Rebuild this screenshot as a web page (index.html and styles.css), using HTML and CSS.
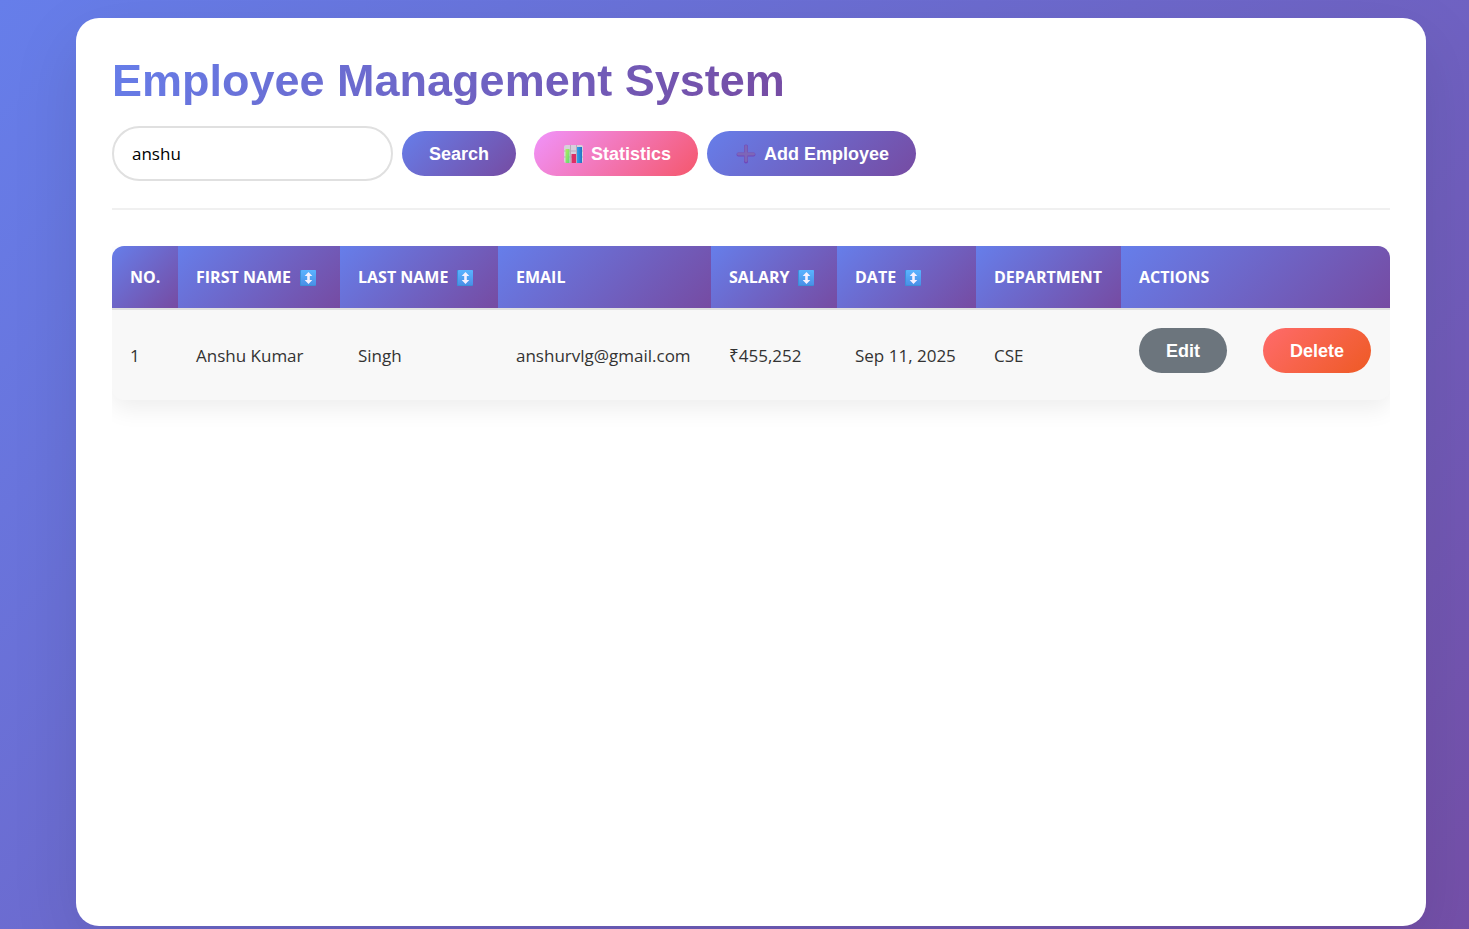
FILE: index.html
```html
<!DOCTYPE html>
<html lang="en">
<head>
<meta charset="utf-8">
<meta name="viewport" content="width=device-width, initial-scale=1">
<title>Employee Management System</title>
<link rel="stylesheet" href="styles.css">
</head>
<body>
<svg class="defs" aria-hidden="true">
  <defs>
    <linearGradient id="tile" x1="0" y1="0" x2="0" y2="1"><stop offset="0" stop-color="#5ab4ff"/><stop offset="1" stop-color="#4a90e8"/></linearGradient>
    <linearGradient id="green" x1="0" y1="0" x2="1" y2="1"><stop offset="0" stop-color="#b6ef5c"/><stop offset="1" stop-color="#5ed67a"/></linearGradient>
    <linearGradient id="blue" x1="0" y1="0" x2="1" y2="0"><stop offset="0" stop-color="#2ea3ec"/><stop offset="1" stop-color="#2472c0"/></linearGradient>
    <symbol id="sort" viewBox="0 0 16 16">
      <rect width="16" height="16" rx="1" fill="#3c8fd8"/>
      <rect x="1" width="15" height="15" rx="1" fill="url(#tile)"/>
      <path d="M8.500 2 12.300 6H9.800v4h2.500L8.500 14 4.700 10h2.500V6H4.700z" fill="#f6f1ff"/>
    </symbol>
  </defs>
</svg>
<main class="card">
  <header class="header">
    <h1 class="title">Employee Management System</h1>
    <div class="toolbar">
      <form class="search" onsubmit="return false">
        <input class="search-input" type="text" aria-label="Search employees" value="anshu">
        <button class="btn" type="submit">Search</button>
      </form>
      <div class="links">
        <button class="btn btn-stats" type="button">
          <svg class="icon" viewBox="0 0 20 20" aria-hidden="true">
            <rect x="1" y="1" width="19" height="18" rx="2" fill="#d8d0dc"/>
            <path d="M1 7h19M1 13h19M7.500 1v18M13.500 1v18" stroke="#b9acbd" stroke-width="1"/>
            <rect x="2.500" y="5" width="4" height="14" fill="url(#green)"/>
            <rect x="8.500" y="10" width="4.500" height="9" fill="#dc2f66"/>
            <rect x="14" y="3" width="5" height="16" fill="url(#blue)"/>
          </svg>Statistics</button>
        <button class="btn" type="button">
          <svg class="icon" viewBox="0 0 20 20" aria-hidden="true">
            <path d="M10 2.500v15M2.500 10.500h15" stroke="#7046ba" stroke-width="4" stroke-linecap="round"/>
            <path d="M10 2.500v14M2.500 10h15" stroke="#7d66b8" stroke-width="3" stroke-linecap="round"/>
          </svg>Add Employee</button>
      </div>
    </div>
  </header>
  <div class="table-wrap">
    <table class="table">
      <colgroup>
        <col class="c-no"><col class="c-first"><col class="c-last"><col class="c-email"><col class="c-salary"><col class="c-date"><col class="c-dept"><col>
      </colgroup>
      <thead>
        <tr>
          <th>No.</th>
          <th>First Name<svg class="sort" aria-hidden="true"><use href="#sort"/></svg></th>
          <th>Last Name<svg class="sort" aria-hidden="true"><use href="#sort"/></svg></th>
          <th>Email</th>
          <th>Salary<svg class="sort" aria-hidden="true"><use href="#sort"/></svg></th>
          <th>Date<svg class="sort" aria-hidden="true"><use href="#sort"/></svg></th>
          <th>Department</th>
          <th>Actions</th>
        </tr>
      </thead>
      <tbody>
        <tr>
          <td>1</td>
          <td>Anshu Kumar</td>
          <td>Singh</td>
          <td>anshurvlg@gmail.com</td>
          <td>₹455,252</td>
          <td>Sep 11, 2025</td>
          <td>CSE</td>
          <td><div class="actions"><button class="btn btn-edit" type="button">Edit</button><button class="btn btn-delete" type="button">Delete</button></div></td>
        </tr>
      </tbody>
    </table>
  </div>
</main>
</body>
</html>
```
FILE: styles.css
```css
* { box-sizing: border-box; }

body {
  margin: 0;
  min-height: 100vh;
  padding: 18px 43px 3px 76px;
  background: linear-gradient(135deg, #667eea 0%, #764ba2 110%);
  color: #333;
  font-family: "Open Sans", "Noto Sans", sans-serif;
  font-size: 17px;
  display: flex;
}

.defs { position: absolute; width: 0; height: 0; }

.card {
  flex: 1;
  min-width: 0;
  display: flex;
  flex-direction: column;
  padding: 36px;
  background: #fff;
  border-radius: 23px;
  box-shadow: 0 23px 68px rgba(0, 0, 0, 0.1);
}

.header {
  display: flex;
  flex-direction: column;
  align-items: flex-start;
  gap: 18px;
  padding-bottom: 27px;
  border-bottom: 2px solid #f0f0f0;
  margin-bottom: 36px;
}

.title {
  margin: 0;
  font: 700 45px/54px "Liberation Sans", Arial, sans-serif;
  background: linear-gradient(135deg, #667eea, #764ba2);
  -webkit-background-clip: text;
  background-clip: text;
  color: transparent;
}

.toolbar { display: flex; flex-wrap: wrap; align-items: center; gap: 18px; }
.search, .links { display: flex; flex-wrap: wrap; align-items: center; gap: 9px; }

.search-input {
  width: 281px;
  height: 55px;
  padding: 0 18px;
  border: 2px solid #e0e0e0;
  border-radius: 28px;
  background: #fff;
  color: #000;
  font: inherit;
}

.btn {
  display: inline-flex;
  align-items: center;
  height: 45px;
  padding: 0 27px;
  border: 0;
  border-radius: 23px;
  background: linear-gradient(135deg, #667eea, #764ba2);
  color: #fff;
  font: 700 18px/20px "Liberation Sans", Arial, sans-serif;
  cursor: pointer;
}

.btn-stats { background: linear-gradient(135deg, #f093fb, #f5576c); }
.btn-edit { background: #6c757d; }
.btn-delete { background: linear-gradient(135deg, #ff6b6b, #ee5a24); }

.icon { width: 20px; height: 20px; margin: 0 8px 0 2px; }

.table-wrap { flex: 1; overflow: auto hidden; }

.table {
  width: 100%;
  table-layout: fixed;
  border-collapse: separate;
  border-spacing: 0;
  border-radius: 12px;
  overflow: hidden;
  background: #f8f8f8;
  box-shadow: 0 9px 23px rgba(0, 0, 0, 0.07);
}

.c-no { width: 66px; }
.c-first { width: 162px; }
.c-last { width: 158px; }
.c-email { width: 213px; }
.c-salary { width: 126px; }
.c-date { width: 139px; }
.c-dept { width: 145px; }

.table th, .table td { padding: 18px; text-align: left; white-space: nowrap; }

.table td:last-child { padding-right: 0; }

.table th {
  height: 64px;
  padding: 0 0 0 18px;
  border-bottom: 2px solid #e0e0e0;
  background: linear-gradient(135deg, #667eea, #764ba2) padding-box;
  color: #fff;
  font-size: 16px;
  font-weight: 700;
  text-transform: uppercase;
}

.sort { width: 16px; height: 16px; margin-left: 9px; vertical-align: -3px; }

.actions { display: flex; gap: 36px; padding-bottom: 9px; }
```
